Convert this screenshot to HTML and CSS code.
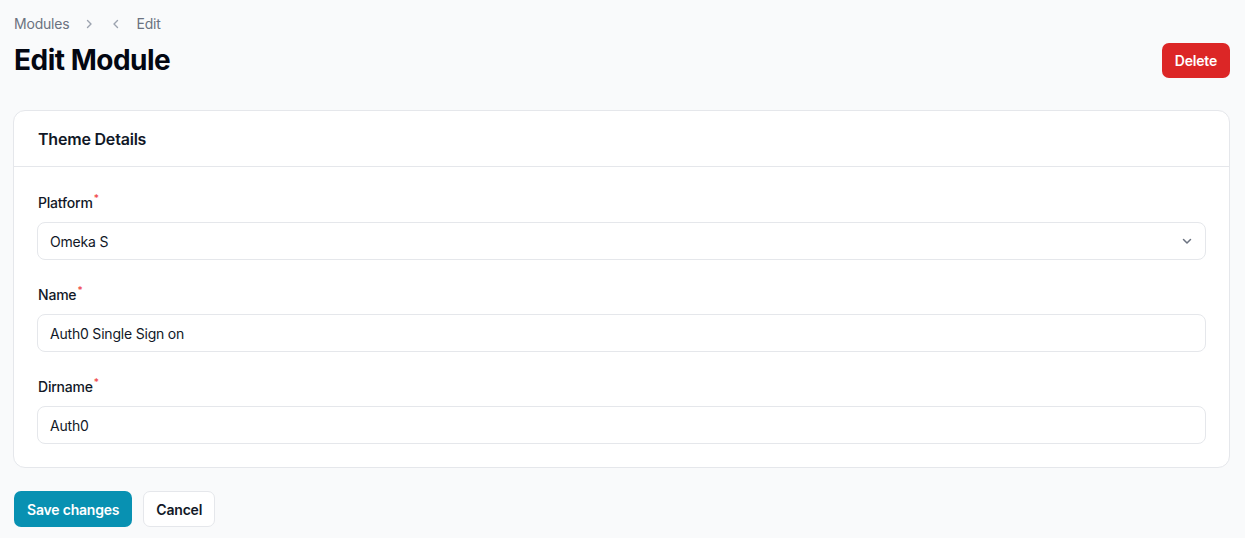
FILE: index.html
```html
<!DOCTYPE html>
<html lang="en">
<head>
<meta charset="utf-8">
<title>Edit Module</title>
<link rel="stylesheet" href="styles.css">
</head>
<body>
<div class="page">
  <nav class="crumbs">
    <span class="crumb">Modules</span>
    <svg class="chev" width="12" height="12" viewBox="0 0 12 12"><path d="M4.5 2.5 8 6 4.5 9.5" fill="none" stroke="currentColor" stroke-width="1.4" stroke-linecap="round" stroke-linejoin="round"/></svg>
    <svg class="chev" width="12" height="12" viewBox="0 0 12 12"><path d="M7.5 2.5 4 6 7.5 9.5" fill="none" stroke="currentColor" stroke-width="1.4" stroke-linecap="round" stroke-linejoin="round"/></svg>
    <span class="crumb">Edit</span>
  </nav>
  <header class="head">
    <h1 class="title">Edit Module</h1>
    <button class="btn btn-danger">Delete</button>
  </header>
  <section class="card">
    <div class="card-head">Theme Details</div>
    <div class="card-body">
      <div class="field">
        <label class="label">Platform<span class="req">*</span></label>
        <div class="select">
          <span>Omeka S</span>
          <svg class="caret" width="14" height="14" viewBox="0 0 14 14"><path d="M3.5 5.5 7 9l3.5-3.5" fill="none" stroke="currentColor" stroke-width="1.5" stroke-linecap="round" stroke-linejoin="round"/></svg>
        </div>
      </div>
      <div class="field">
        <label class="label">Name<span class="req">*</span></label>
        <div class="input">Auth0 Single Sign on</div>
      </div>
      <div class="field">
        <label class="label">Dirname<span class="req">*</span></label>
        <div class="input">Auth0</div>
      </div>
    </div>
  </section>
  <div class="actions">
    <button class="btn btn-primary">Save changes</button>
    <button class="btn btn-light">Cancel</button>
  </div>
</div>
</body>
</html>
```
FILE: styles.css
```css
* { box-sizing: border-box; }
html, body { margin: 0; }
body {
  background: #f9fafb;
  font-family: Inter, "Noto Sans", sans-serif;
  color: #111827;
  letter-spacing: -0.2px;
}
.page {
  padding: 14px 15px 0 13px;
}
.crumbs {
  display: flex;
  align-items: center;
  height: 20px;
  font-size: 14px;
  color: #6b7280;
  padding-left: 1px;
}
.crumb { line-height: 20px; }
.chev { color: #9ca3af; margin-left: 14px; }
.chev + .chev { margin-left: 15px; }
.chev + .crumb { margin-left: 14px; }
.head {
  display: flex;
  justify-content: space-between;
  align-items: center;
  margin-top: 8px;
  height: 36px;
  padding-left: 1px;
}
.title {
  margin: 0;
  font-size: 28px;
  line-height: 36px;
  font-weight: 700;
  letter-spacing: -0.5px;
  color: #030712;
}
.btn {
  font-family: inherit;
  font-size: 14px;
  font-weight: 600;
  letter-spacing: -0.2px;
  height: 36px;
  padding: 0 12px;
  border-radius: 7px;
  border: 1px solid transparent;
  cursor: pointer;
}
.btn-danger { background: #dc2626; color: #fff; height: 35px; padding: 0 12px; }
.btn-primary { background: #0891b2; color: #fff; }
.btn-light { background: #fff; color: #111827; border-color: #e5e7eb; }
.actions .btn:first-child { margin-left: 1px; }
.card {
  margin-top: 32px;
  background: #fff;
  border: 1px solid #e5e7eb;
  border-radius: 12px;
}
.card-head {
  height: 56px;
  display: flex;
  align-items: center;
  padding: 0 24px;
  font-size: 16px;
  font-weight: 600;
  border-bottom: 1px solid #e5e7eb;
}
.card-body {
  padding: 26px 23px 23px;
  display: flex;
  flex-direction: column;
  gap: 25px;
}
.field { display: flex; flex-direction: column; }
.label {
  font-size: 14px;
  font-weight: 500;
  line-height: 20px;
  height: 20px;
  margin-bottom: 9px;
  padding-left: 1px;
  color: #111827;
}
.req {
  color: #ef4444;
  font-size: 10px;
  line-height: 0;
  position: relative;
  top: -6px;
  margin-left: 1px;
}
.input, .select {
  height: 38px;
  border: 1px solid #e5e7eb;
  border-radius: 8px;
  padding: 0 12px;
  display: flex;
  align-items: center;
  font-size: 14px;
  color: #111827;
  background: #fff;
}
.select { justify-content: space-between; }
.caret { color: #6b7280; margin-right: -1px; }
.actions {
  display: flex;
  gap: 11px;
  margin-top: 23px;
}
```
